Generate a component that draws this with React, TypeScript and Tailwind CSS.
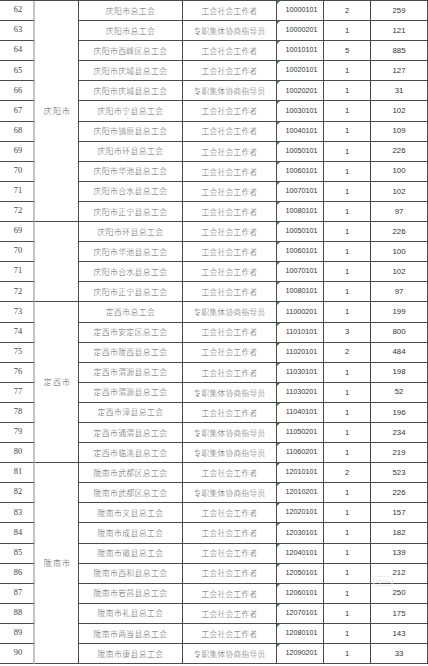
import React from "react";

type Row = [number, string, string, string, number, number];

const g1: Row[] = [
  [62, "庆阳市总工会", "工会社会工作者", "10000101", 2, 259],
  [63, "庆阳市总工会", "专职集体协商指导员", "10000201", 1, 121],
  [64, "庆阳市西峰区总工会", "工会社会工作者", "10010101", 5, 885],
  [65, "庆阳市庆城县总工会", "工会社会工作者", "10020101", 1, 127],
  [66, "庆阳市庆城县总工会", "专职集体协商指导员", "10020201", 1, 31],
  [67, "庆阳市宁县总工会", "工会社会工作者", "10030101", 1, 102],
  [68, "庆阳市镇原县总工会", "工会社会工作者", "10040101", 1, 109],
  [69, "庆阳市环县总工会", "工会社会工作者", "10050101", 1, 226],
  [70, "庆阳市华池县总工会", "工会社会工作者", "10060101", 1, 100],
  [71, "庆阳市合水县总工会", "工会社会工作者", "10070101", 1, 102],
  [72, "庆阳市正宁县总工会", "工会社会工作者", "10080101", 1, 97],
];
const g2: Row[] = [
  [69, "庆阳市环县总工会", "工会社会工作者", "10050101", 1, 226],
  [70, "庆阳市华池县总工会", "工会社会工作者", "10060101", 1, 100],
  [71, "庆阳市合水县总工会", "工会社会工作者", "10070101", 1, 102],
  [72, "庆阳市正宁县总工会", "工会社会工作者", "10080101", 1, 97],
];
const g3: Row[] = [
  [73, "定西市总工会", "专职集体协商指导员", "11000201", 1, 199],
  [74, "定西市安定区总工会", "工会社会工作者", "11010101", 3, 800],
  [75, "定西市陇西县总工会", "工会社会工作者", "11020101", 2, 484],
  [76, "定西市渭源县总工会", "工会社会工作者", "11030101", 1, 198],
  [77, "定西市渭源县总工会", "专职集体协商指导员", "11030201", 1, 52],
  [78, "定西市漳县总工会", "工会社会工作者", "11040101", 1, 196],
  [79, "定西市通渭县总工会", "专职集体协商指导员", "11050201", 1, 234],
  [80, "定西市临洮县总工会", "专职集体协商指导员", "11060201", 1, 219],
];
const g4: Row[] = [
  [81, "陇南市武都区总工会", "工会社会工作者", "12010101", 2, 523],
  [82, "陇南市武都区总工会", "专职集体协商指导员", "12010201", 1, 226],
  [83, "陇南市文县总工会", "工会社会工作者", "12020101", 1, 157],
  [84, "陇南市成县总工会", "工会社会工作者", "12030101", 1, 182],
  [85, "陇南市徽县总工会", "工会社会工作者", "12040101", 1, 139],
  [86, "陇南市西和县总工会", "工会社会工作者", "12050101", 1, 212],
  [87, "陇南市宕昌县总工会", "工会社会工作者", "12060101", 1, 250],
  [88, "陇南市礼县总工会", "工会社会工作者", "12070101", 1, 175],
  [89, "陇南市两当县总工会", "工会社会工作者", "12080101", 1, 143],
  [90, "陇南市康县总工会", "专职集体协商指导员", "12090201", 1, 33],
];

const cell =
  "flex items-center justify-center border-b border-r border-[#4a4a4a] overflow-hidden whitespace-nowrap";

function Rows({ rows }: { rows: Row[] }) {
  return (
    <>
      {rows.map((r, i) => (
        <React.Fragment key={i}>
          <div className="col-start-1 flex items-center justify-center pl-[3px] border-b border-[#4a4a4a] border-r-2 border-r-[#c4c4c4] font-['Liberation_Serif',serif] text-[8.4px] text-[#444]">
            {r[0]}
          </div>
          <div className={`${cell} col-start-3 font-['Noto_Sans_CJK_SC',sans-serif] text-[7.9px] tracking-[0.35px] text-[#666] font-light`}>
            {r[1]}
          </div>
          <div className={`${cell} col-start-4 font-['Noto_Sans_CJK_SC',sans-serif] text-[7.6px] tracking-[0.4px] text-[#666] font-light`}>
            {r[2]}
          </div>
          <div className={`${cell} col-start-5 relative pl-[3px] font-['Liberation_Sans',Arial,sans-serif] text-[7.2px] text-[#333]`}>
            <span className="absolute left-0 top-0 h-0 w-0 border-t-[3px] border-r-[3px] border-t-[#2f8f2f] border-r-transparent" />
            {r[3]}
          </div>
          <div className={`${cell} col-start-6 font-['Liberation_Sans',Arial,sans-serif] text-[7.6px] text-[#333]`}>
            {r[4]}
          </div>
          <div className={`${cell} col-start-7 font-['Liberation_Sans',Arial,sans-serif] text-[7.8px] text-[#333]`}>
            {r[5]}
          </div>
        </React.Fragment>
      ))}
    </>
  );
}

function City({ span, label }: { span: string; label?: string }) {
  return (
    <div
      className={`${span} col-start-2 flex items-center justify-center pl-[2px] border-b border-r border-[#4a4a4a] font-['Noto_Sans_CJK_SC',sans-serif] text-[8px] tracking-[1.2px] text-[#555] font-light`}
    >
      {label}
    </div>
  );
}

export default function App() {
  return (
    <div className="relative h-[666px] w-[428px] overflow-hidden bg-white">
      <div className="grid grid-cols-[35px_44px_104px_94px_47px_47px_57px] auto-rows-[20.1px] border-t border-[#4a4a4a]">
        <City span="row-start-1 row-span-11" label="庆阳市" />
        <City span="row-start-12 row-span-4" />
        <City span="row-start-16 row-span-8" label="定西市" />
        <City span="row-start-24 row-span-10" label="陇南市" />
        <Rows rows={[...g1, ...g2, ...g3, ...g4]} />
      </div>
      <div className="pointer-events-none absolute left-[373px] top-[576px] rounded-sm border border-[#eeeeee] px-[2px] font-['Liberation_Sans',Arial,sans-serif] text-[6px] leading-[8px] text-[#e2e2e2]">
        upfile
      </div>
    </div>
  );
}
